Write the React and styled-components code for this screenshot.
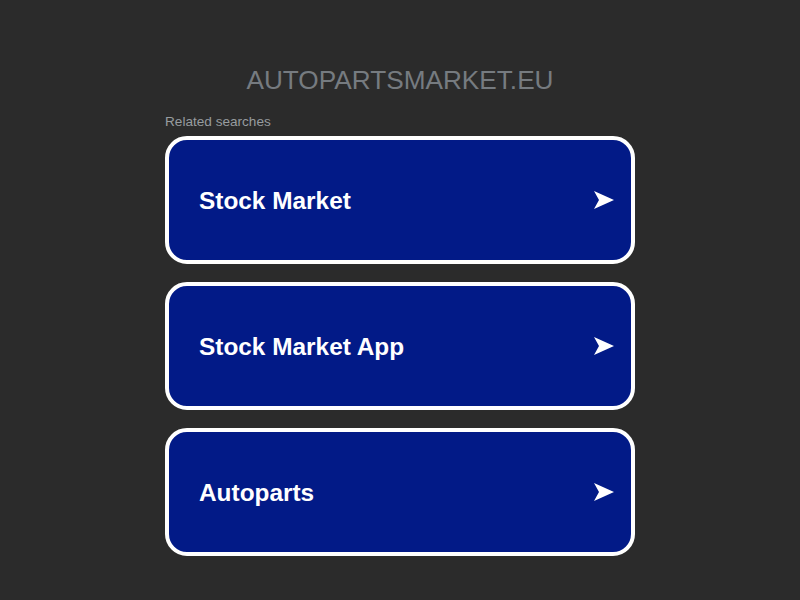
import React from 'react';
import styled, { createGlobalStyle } from 'styled-components';

const GlobalStyle = createGlobalStyle`
  html, body {
    margin: 0;
    padding: 0;
    background: #2b2b2b;
    font-family: "Liberation Sans", Arial, sans-serif;
  }
`;

const Page = styled.div`
  width: 470px;
  margin: 0 auto;
  padding-top: 65px;
`;

const Domain = styled.h1`
  margin: 0 0 19px;
  text-align: center;
  font-size: 26.2px;
  font-weight: normal;
  line-height: 30px;
  color: #767b80;
`;

const Label = styled.div`
  font-size: 13.6px;
  line-height: 16px;
  color: #979c9f;
  margin-bottom: 6px;
`;

const List = styled.div`
  display: flex;
  flex-direction: column;
  gap: 18px;
`;

const Card = styled.a`
  display: flex;
  align-items: center;
  justify-content: space-between;
  box-sizing: border-box;
  height: 128px;
  padding: 0 16px 0 30px;
  border: 4px solid #ffffff;
  border-radius: 22px;
  background: #021a87;
  color: #ffffff;
  text-decoration: none;
  font-size: 24.4px;
  font-weight: bold;
`;

const Title = styled.span`
  padding-top: 2px;
`;

const Arrow = () => (
  <svg width="22" height="20" viewBox="0 0 22 20">
    <polygon points="1,1 21,10 1,19 6,10" fill="#ffffff" />
  </svg>
);

const searches = ['Stock Market', 'Stock Market App', 'Autoparts'];

export default function App() {
  return (
    <>
      <GlobalStyle />
      <Page>
        <Domain>AUTOPARTSMARKET.EU</Domain>
        <Label>Related searches</Label>
        <List>
          {searches.map((s) => (
            <Card key={s} href="#">
              <Title>{s}</Title>
              <Arrow />
            </Card>
          ))}
        </List>
      </Page>
    </>
  );
}
